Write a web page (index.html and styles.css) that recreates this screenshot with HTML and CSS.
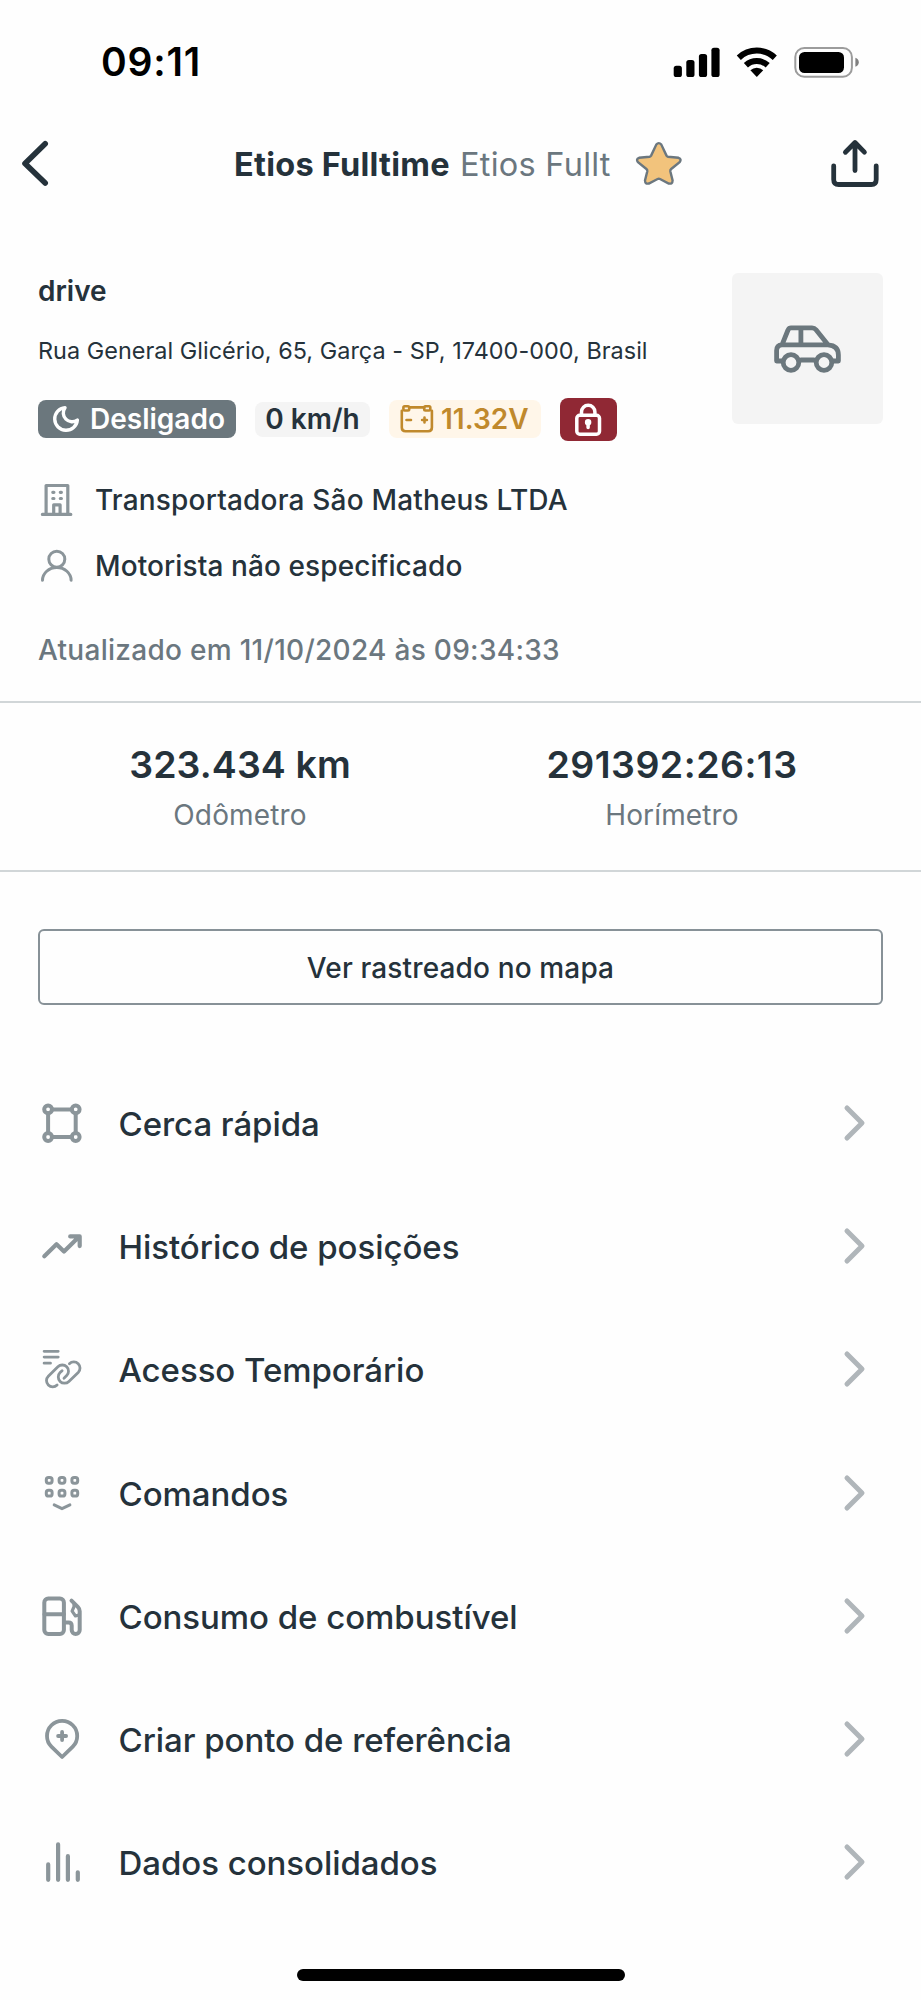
FILE: index.html
```html
<!DOCTYPE html>
<html lang="pt-BR">
<head>
<meta charset="utf-8">
<title>Etios Fulltime</title>
<link rel="stylesheet" href="styles.css">
</head>
<body>
<div class="screen">
  <div class="status">
    <span class="clock">09:11</span>
    <svg width="192" height="36" viewBox="670 43 192 36">
      <rect x="673.7" y="64.8" width="8.2" height="11.2" rx="2.6"/>
      <rect x="686.3" y="59" width="8.2" height="17" rx="2.6"/>
      <rect x="698.9" y="53" width="8.2" height="23" rx="2.6"/>
      <rect x="711.4" y="46.7" width="8.2" height="29.3" rx="2.6"/>
      <path d="M738.8 56.7A26.4 26.4 0 0 1 774.8 56.7M745.9 64.3A16 16 0 0 1 767.7 64.3" fill="none" stroke="#000" stroke-width="6"/>
      <path d="M756.8 76L750.4 69.2A9.3 9.3 0 0 1 763.2 69.2Z"/>
      <rect x="795.3" y="47" width="56.6" height="28.8" rx="9" fill="none" stroke="#9c9c9c" stroke-width="2"/>
      <rect x="799" y="51" width="45" height="21" rx="5.5"/>
      <path d="M855.4 56.8Q858.8 58.2 858.8 61.3T855.4 65.8Z" fill="#808080"/>
    </svg>
  </div>

  <header class="header">
    <svg class="line back" width="34" height="50" viewBox="18 139 34 50"><path d="M45.2 143.8L25 163.5L45.2 183"/></svg>
    <h1 class="title">Etios Fulltime</h1>
    <span class="subtitle">Etios Fullt</span>
    <svg class="star" width="50" height="48" viewBox="634 140 50 48"><path d="M656.3 144.6Q658.8 141.6 661.3 144.6L666.5 155.6Q667 156.5 668 156.7L678.5 157.8Q682 159 679.6 162.2L671.2 169Q670.1 170 670.3 171.2L672.6 180.5Q672.5 184.4 668.7 183.5L660 179Q658.8 178.4 657.6 179L648.9 183.5Q645.1 184.4 645 180.5L647.3 171.2Q647.5 170 646.4 169L638 162.2Q635.6 159 639.1 157.8L649.6 156.7Q650.6 156.5 651.1 155.6Z"/></svg>
    <svg class="line share" width="54" height="54" viewBox="828 136.5 54 54"><path d="M833.7 165.3V179Q833.7 184 838.7 184H871.3Q876.2 184 876.2 179V165.3M855 170V142.5M845.4 151.7L855 142L864.4 151.7"/></svg>
  </header>

  <section class="summary">
    <div class="info">
      <strong class="name">drive</strong>
      <p class="address">Rua General Glicério, 65, Garça - SP, 17400-000, Brasil</p>
      <div class="badges">
        <span class="badge off">
          <svg class="line" width="30" height="30" viewBox="51 405 30 30" stroke-width="2.7"><path transform="translate(50.9 404.9) scale(1.26)" d="M21 12.79A9 9 0 1 1 11.21 3 7 7 0 0 0 21 12.79z"/></svg>
          <span>Desligado</span>
        </span>
        <span class="badge speed">0 km/h</span>
        <span class="badge volt">
          <svg class="line" width="38" height="30" viewBox="398.5 405 38 30" stroke-width="2.6"><path d="M409.8 408.4H424.8M402.3 411.8V428.6Q402.3 432.3 406 432.3H428.7Q432.4 432.3 432.4 428.6V411.8M407 421H411.5M422.6 421H427.4M425 418.6V423.4"/><rect x="403.9" y="407.3" width="5.8" height="4.2" rx="1.2"/><rect x="424.7" y="407.3" width="6.1" height="4.2" rx="1.2"/></svg>
          <span>11.32V</span>
        </span>
        <span class="badge lock">
          <svg class="line" width="32" height="38" viewBox="572 401 32 38" stroke-width="3.5"><rect x="576.8" y="415.3" width="22.7" height="18.9" rx="3"/><path d="M581.5 415V412A6.7 6.7 0 0 1 594.9 412V415M588.1 421.5V427.6"/><circle cx="588.1" cy="422.3" r="1.5"/></svg>
        </span>
      </div>
    </div>
    <div class="thumb">
      <svg class="line" width="71" height="51" viewBox="772 323 71 51" stroke-width="4.8"><path d="M781 361H776.6V350.5Q776.6 345 782 344.8L788 330Q789 327.9 791 327.9H812Q814.5 327.9 816 329.7L828 344.8Q838.4 345.5 838.4 355V361H834M783 344.8H829M800.9 328V344M801 360H814"/><circle cx="791" cy="362.5" r="7.8"/><circle cx="824" cy="362.5" r="7.8"/></svg>
    </div>
  </section>

  <section class="details">
    <div class="detail">
      <svg class="line" width="36" height="36" viewBox="39 482 36 36" stroke-width="3.2"><path d="M42.4 514.4H70.8M46.1 514V485.5H67.8V514M53.7 514V504.8H60.1V514M52.8 492.3H53.9M60.3 492.3H61.4M52.8 498.5H53.9M60.3 498.5H61.4"/></svg>
      <span>Transportadora São Matheus LTDA</span>
    </div>
    <div class="detail">
      <svg class="line" width="36" height="36" viewBox="39 547.7 36 36" stroke-width="3"><circle cx="56.8" cy="558.9" r="8"/><path d="M42.5 580A14.3 12.8 0 0 1 71.1 580"/></svg>
      <span class="driver">Motorista não especificado</span>
    </div>
    <p class="updated">Atualizado em 11/10/2024 às 09:34:33</p>
  </section>

  <section class="stats">
    <div class="stat"><strong>323.434 km</strong><span>Odômetro</span></div>
    <div class="stat"><strong class="hours">291392:26:13</strong><span>Horímetro</span></div>
  </section>

  <button class="map-button">Ver rastreado no mapa</button>

  <nav class="menu">
    <a class="row">
      <svg class="line" width="46" height="46" viewBox="38.5 1100 46 46" stroke-width="4"><path d="M51.4 1109.4H71.4M51.4 1137H71.4M47.6 1113.2V1133.2M75.2 1113.2V1133.2"/><circle cx="47.6" cy="1109.3" r="3.9"/><circle cx="75.2" cy="1109.3" r="3.9"/><circle cx="47.6" cy="1137" r="3.9"/><circle cx="75.2" cy="1137" r="3.9"/></svg>
      <span>Cerca rápida</span>
      <svg class="line chevron" width="26" height="40" viewBox="842 1103 26 40"><path d="M847 1108L862 1123L847 1138"/></svg>
    </a>
    <a class="row">
      <svg class="line" width="46" height="46" viewBox="38.5 1223.2 46 46" stroke-width="4.2"><path d="M43.8 1256.4L56 1244.4L63.5 1251.8L78.5 1237M69.7 1236.6H79.2V1246.3"/></svg>
      <span>Histórico de posições</span>
      <svg class="line chevron" width="26" height="40" viewBox="842 1103 26 40"><path d="M847 1108L862 1123L847 1138"/></svg>
    </a>
    <a class="row">
      <svg class="line" width="46" height="46" viewBox="38.5 1346.4 46 46" stroke-width="2.8"><path d="M43.6 1351.7H57.7M43.6 1357.5H57.7M43.6 1363.6H50M56.6 1385.4A6.2 6.2 0 0 1 47.8 1376.6L57.4 1367.2A6.2 6.2 0 0 1 66.2 1376L63.5 1378.6M68.9 1364.1A6.2 6.2 0 0 1 77.7 1372.9L68.4 1381.8A6.2 6.2 0 0 1 59.6 1373L61.6 1371.1"/></svg>
      <span>Acesso Temporário</span>
      <svg class="line chevron" width="26" height="40" viewBox="842 1103 26 40"><path d="M847 1108L862 1123L847 1138"/></svg>
    </a>
    <a class="row">
      <svg class="line" width="46" height="46" viewBox="38.5 1469.6 46 46" stroke-width="3"><g><rect x="45.8" y="1477.1" width="5.8" height="5.8" rx="2.2"/><rect x="58.6" y="1477.1" width="5.8" height="5.8" rx="2.2"/><rect x="71.4" y="1477.1" width="5.8" height="5.8" rx="2.2"/><rect x="45.8" y="1489.9" width="5.8" height="5.8" rx="2.2"/><rect x="58.6" y="1489.9" width="5.8" height="5.8" rx="2.2"/><rect x="71.4" y="1489.9" width="5.8" height="5.8" rx="2.2"/></g><path d="M53.7 1504.5L61.5 1508.3L69.4 1504.5"/></svg>
      <span>Comandos</span>
      <svg class="line chevron" width="26" height="40" viewBox="842 1103 26 40"><path d="M847 1108L862 1123L847 1138"/></svg>
    </a>
    <a class="row">
      <svg class="line" width="46" height="46" viewBox="38.5 1592.8 46 46" stroke-width="4"><rect x="43.8" y="1598.2" width="19.6" height="35.6" rx="4"/><path d="M44 1614H63.4M63.6 1622.2H68Q71.2 1622.2 71.2 1625.4V1629.8A4 4 0 0 0 79.2 1629.8V1611Q79.2 1608.7 77.5 1607L71 1600.4"/><path stroke-width="3.2" d="M73.5 1603.8V1606.5L71.6 1611L75 1615.8L79 1614.6"/></svg>
      <span>Consumo de combustível</span>
      <svg class="line chevron" width="26" height="40" viewBox="842 1103 26 40"><path d="M847 1108L862 1123L847 1138"/></svg>
    </a>
    <a class="row">
      <svg class="line" width="46" height="46" viewBox="38.5 1716 46 46" stroke-width="3.8"><path d="M61.6 1757L50.9 1746.6A15.1 15.1 0 1 1 72.3 1746.6ZM57.6 1736H65.6M61.6 1732V1740"/></svg>
      <span>Criar ponto de referência</span>
      <svg class="line chevron" width="26" height="40" viewBox="842 1103 26 40"><path d="M847 1108L862 1123L847 1138"/></svg>
    </a>
    <a class="row">
      <svg class="line" width="46" height="46" viewBox="38.5 1839.2 46 46" stroke-width="4.2"><path d="M47.7 1864.6V1880M57.6 1844.6V1880M67.4 1856.4V1880M77.3 1872.5V1880"/></svg>
      <span>Dados consolidados</span>
      <svg class="line chevron" width="26" height="40" viewBox="842 1103 26 40"><path d="M847 1108L862 1123L847 1138"/></svg>
    </a>
  </nav>
  <div class="home"></div>
</div>
</body>
</html>
```
FILE: styles.css
```css
* { box-sizing: border-box; margin: 0; }
body { background: #fefefe; font-family: Inter, "Liberation Sans", sans-serif; color: #25323b; }
svg { display: block; flex: none; }
.line { fill: none; stroke: currentColor; stroke-linecap: round; stroke-linejoin: round; }
.screen { width: 921px; height: 2000px; display: flex; flex-direction: column; overflow: hidden; white-space: nowrap; }

.status { height: 124px; padding: 0 59px 0 101px; display: flex; justify-content: space-between; align-items: center; color: #000; }
.clock { font-size: 39px; font-weight: 600; letter-spacing: 0.8px; padding-bottom: 2px; }

.header { height: 80px; padding: 0 39px 0 18px; display: flex; align-items: center; }
.back { stroke-width: 5.6; }
.share { stroke-width: 4.8; margin-left: auto; }
.title { margin-left: 182px; font-size: 32.5px; font-weight: 700; width: 226px; letter-spacing: 0.25px; }
.subtitle { font-size: 32.5px; color: #6b777f; width: 174px; letter-spacing: 0.25px; }
.star { fill: #f2c37c; stroke: #6b777f; stroke-width: 2.4; }

.summary { height: 253px; padding: 69px 38px 0; display: flex; justify-content: space-between; align-items: flex-start; }
.info { display: flex; flex-direction: column; align-items: flex-start; }
.name { font-size: 28px; font-weight: 600; line-height: 34px; padding-top: 1px; }
.address { font-size: 23.4px; line-height: 30px; margin-top: 28px; letter-spacing: 0.04px; }
.badges { display: flex; align-items: center; margin-top: 32px; height: 43px; font-size: 28px; font-weight: 600; }
.badge { display: flex; align-items: center; height: 38px; margin-bottom: 1px; border-radius: 8px; }
.off { width: 198px; padding-left: 13px; gap: 9px; background: #6b777d; color: #fff; }
.speed { width: 115px; height: 35px; margin-left: 19px; justify-content: center; background: #f4f4f4; }
.volt { width: 152px; margin-left: 19px; padding-left: 9px; gap: 5px; background: #fff6e9; color: #c0892c; }
.lock { width: 57px; height: 43px; margin: 0 0 0 18.5px; justify-content: center; background: #902834; color: #fff; }
.thumb { width: 151px; height: 151px; border-radius: 6px; background: #f4f4f4; color: #6b777d; display: flex; align-items: center; justify-content: center; }

.details { height: 246px; padding: 25px 38px 0; border-bottom: 2px solid #d1d6d8; font-size: 28px; font-weight: 500; }
.detail { display: flex; align-items: center; gap: 20px; height: 36px; margin-bottom: 29.7px; padding-left: 1px; letter-spacing: 0.18px; }
.detail svg { color: #8b959a; }
.driver { letter-spacing: 0.1px; }
.updated { padding-top: 20px; line-height: 34px; margin-top: 0.6px; color: #6b777f; letter-spacing: 0.29px; }

.stats { height: 169px; padding: 40px 24px 0 25px; display: grid; grid-template-columns: 430px 434px; border-bottom: 2px solid #d1d6d8; }
.stat { display: flex; flex-direction: column; align-items: center; }
.stat strong { font-size: 37.5px; font-weight: 600; line-height: 44px; letter-spacing: 0.1px; }
.stat .hours { letter-spacing: 0.47px; }
.stat span { font-size: 28px; line-height: 34px; margin-top: 11px; color: #6b777f; letter-spacing: 0.15px; }

.map-button { margin: 57px 38px 0; padding: 2px 0 0; height: 76px; border: 2px solid #879197; border-radius: 6px; background: transparent; color: inherit; font: 500 28px Inter, "Liberation Sans", sans-serif; letter-spacing: 0.14px; }

.menu { margin-top: 56.4px; }
.row { height: 123.2px; padding: 0 53px 0 38.5px; display: flex; align-items: center; }
.row > svg { color: #8b959a; }
.row > span { padding-top: 2px; margin-left: 34px; font-size: 33px; font-weight: 500; letter-spacing: -0.05px; }
.row > .chevron { margin-left: auto; color: #b0b6ba; stroke-width: 5; }

.home { width: 328px; height: 12px; margin: 45px auto 0; border-radius: 6px; background: #000; flex: none; }
```
